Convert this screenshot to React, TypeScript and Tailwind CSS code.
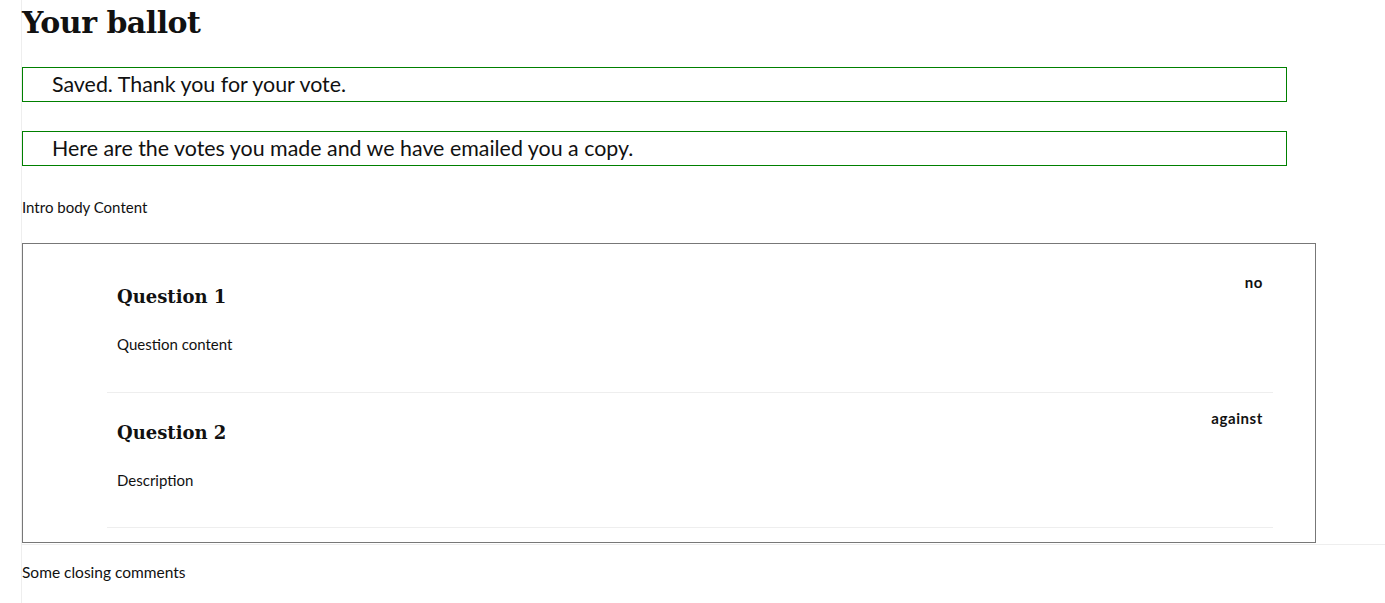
import React from 'react'

interface Vote {
  id: string
  title: string
  body: string
  answer: string
}

const votes: Vote[] = [
  { id: 'q1', title: 'Question 1', body: 'Question content', answer: 'no' },
  { id: 'q2', title: 'Question 2', body: 'Description', answer: 'against' },
]

const sans = "font-['Lato','Liberation_Sans',sans-serif]"
const slab = "font-['DejaVu_Serif','Liberation_Serif',serif]"

export default function App() {
  return (
    <div className={`min-h-screen bg-white text-[#111] ${sans}`}>
      <div className="ml-[21px] min-h-[603px] border-l border-[#eee]">
        <h1 className={`${slab} pt-[3px] text-[30px] font-bold leading-[40px] tracking-[-0.5px]`}>Your ballot</h1>

        {/* Messages */}
        <div className="mt-[24px] w-[1265px] border border-[#008000] pl-[29px] text-[21.4px] leading-[33px]">
          Saved. Thank you for your vote.
        </div>
        <div className="mt-[29px] w-[1265px] border border-[#008000] pl-[29px] text-[21.4px] leading-[33px]">
          Here are the votes you made and we have emailed you a copy.
        </div>

        <p className="mt-[31px] text-[15px] leading-[20px]">Intro body Content</p>

        {/* Ballot */}
        <div className="mt-[26px] border-b border-[#eee] pb-px">
          <div className="w-[1294px] border border-[#777] pt-[13px] pb-[14px] pl-[84px] pr-[42px]">
            {votes.map((v) => (
              <div key={v.id} className="border-b border-[#eee] px-[10px] pt-[17px] pb-[38px] last:pb-[37px]">
                <div className="float-right text-[15px] font-bold leading-[17px] tracking-[0.6px]">{v.answer}</div>
                <h3 className={`${slab} mt-[11px] text-[18px] font-bold leading-[24px]`}>{v.title}</h3>
                <p className="mt-[25px] text-[15px] leading-[20px]">{v.body}</p>
              </div>
            ))}
          </div>
        </div>

        <p className="mt-[17px] text-[15.5px] leading-[20px]">Some closing comments</p>
      </div>
    </div>
  )
}
